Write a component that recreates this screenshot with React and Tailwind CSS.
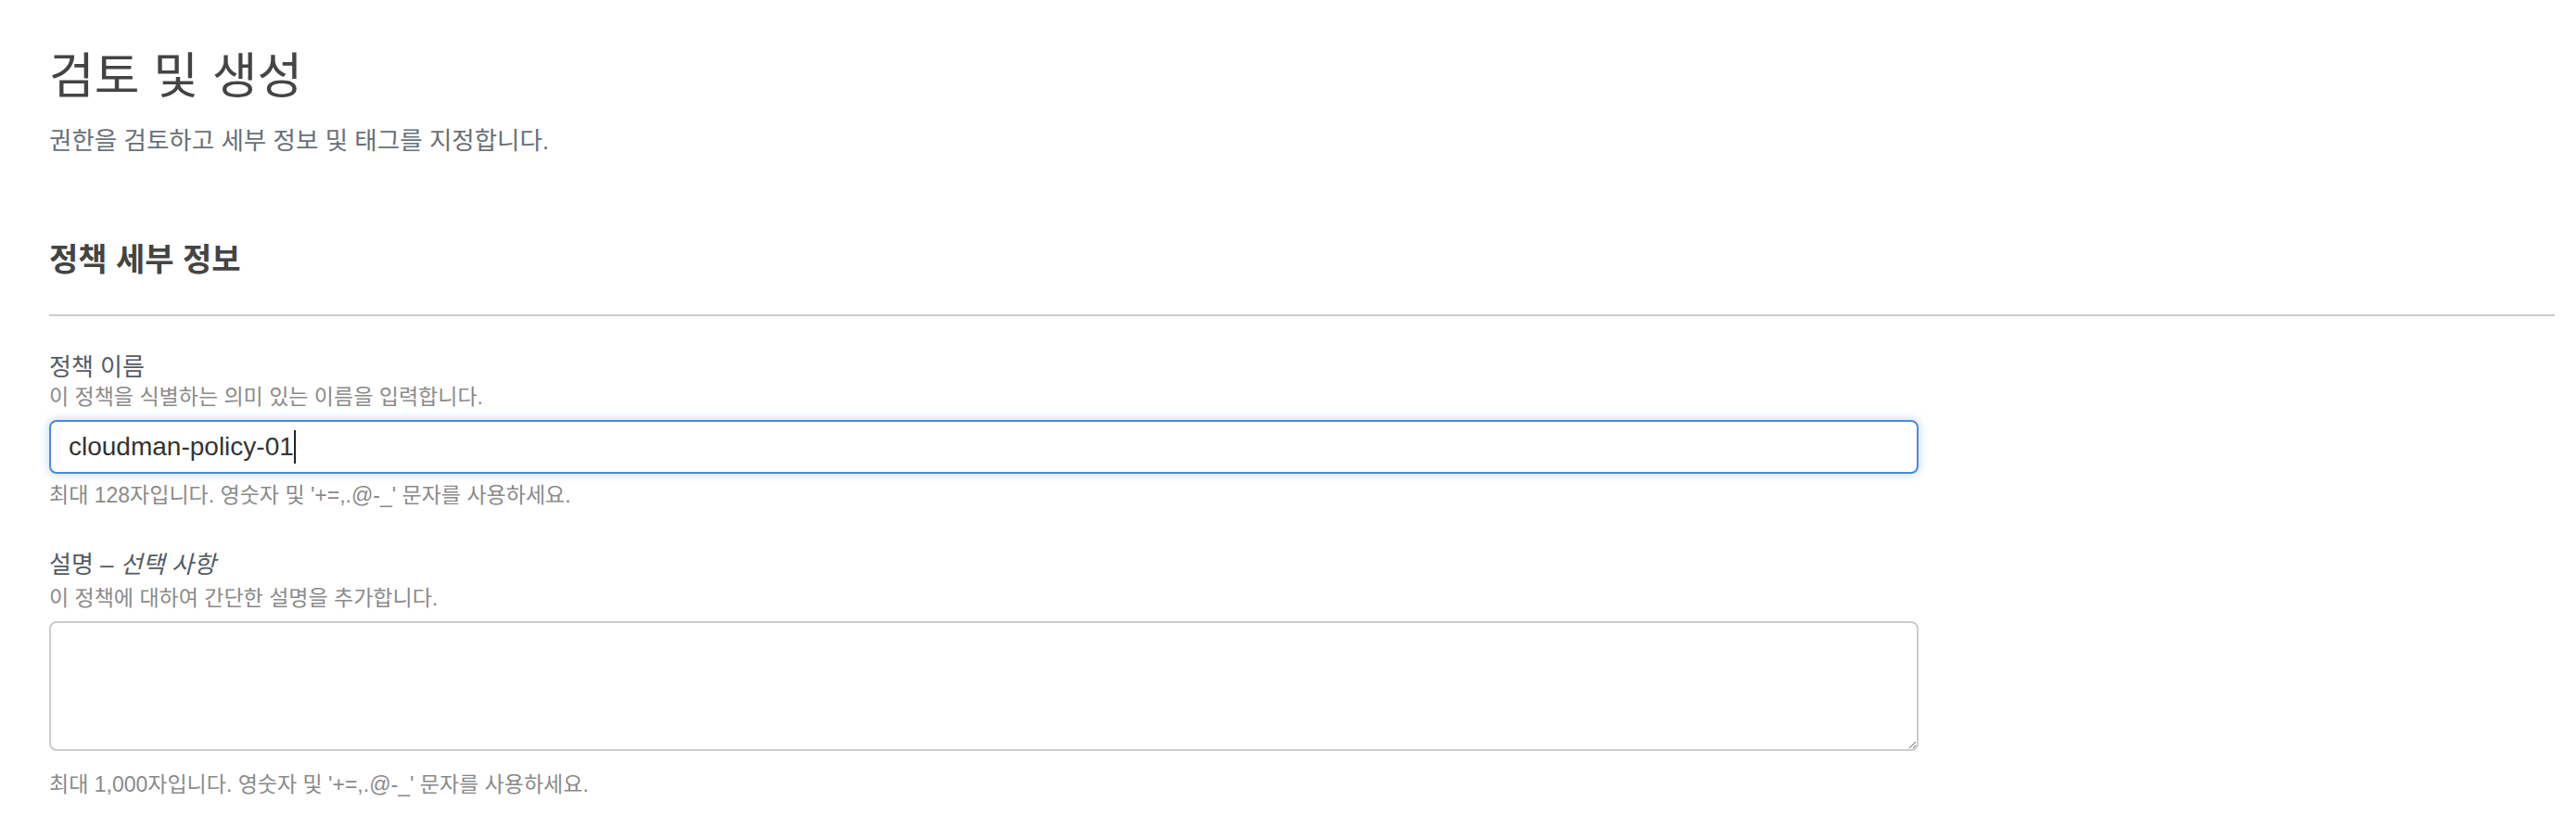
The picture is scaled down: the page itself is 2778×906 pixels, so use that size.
import React from 'react';

const FONT = { fontFamily: '"Liberation Sans", "Noto Sans CJK KR", sans-serif' };

const App = () => {
    return (
        <main style={FONT} className="w-full min-h-[906px] bg-white pl-[53px] pr-[23px] pt-[54px]">
            <h1 className="text-[53px] leading-[58px] font-normal text-[#444444]">검토 및 생성</h1>
            <p className="mt-[24px] text-[26.5px] leading-[32px] text-[#687078]">
                권한을 검토하고 세부 정보 및 태그를 지정합니다.
            </p>

            <h2 className="mt-[92px] text-[34px] leading-[40px] font-bold text-[#444444]">정책 세부 정보</h2>
            <div className="mt-[39px] h-[2px] bg-[#cccccc]" />

            <section className="w-[2016px]">
                <label className="block mt-[40px] text-[26px] leading-[30px] text-[#545b64]">정책 이름</label>
                <div className="mt-[3px] text-[23px] leading-[28px] text-[#8a8a8a]">
                    이 정책을 식별하는 의미 있는 이름을 입력합니다.
                </div>
                <div className="mt-[11px] h-[58px] flex items-center px-[19px] rounded-[8px] border-2 border-[#4a89dc] shadow-[0_0_8px_2px_rgba(74,137,220,0.25)]">
                    <span className="text-[28px] leading-[34px] text-[#333333]">cloudman-policy-01</span>
                    <span className="w-[2px] h-[36px] bg-[#222222]" />
                </div>
                <div className="mt-[9px] text-[23px] leading-[28px] text-[#8a8a8a]">
                    최대 128자입니다. 영숫자 및 '+=,.@-_' 문자를 사용하세요.
                </div>

                <label className="block mt-[46px] text-[26px] leading-[30px] text-[#545b64]">
                    설명 – <i>선택 사항</i>
                </label>
                <div className="mt-[7px] text-[23px] leading-[28px] text-[#8a8a8a]">
                    이 정책에 대하여 간단한 설명을 추가합니다.
                </div>
                <textarea
                    className="block mt-[11px] w-full h-[140px] rounded-[8px] border-2 border-[#cccccc] bg-white outline-none"
                    defaultValue=""
                />
                <div className="mt-[22px] text-[23px] leading-[28px] text-[#8a8a8a]">
                    최대 1,000자입니다. 영숫자 및 '+=,.@-_' 문자를 사용하세요.
                </div>
            </section>
        </main>
    );
};

export default App;
